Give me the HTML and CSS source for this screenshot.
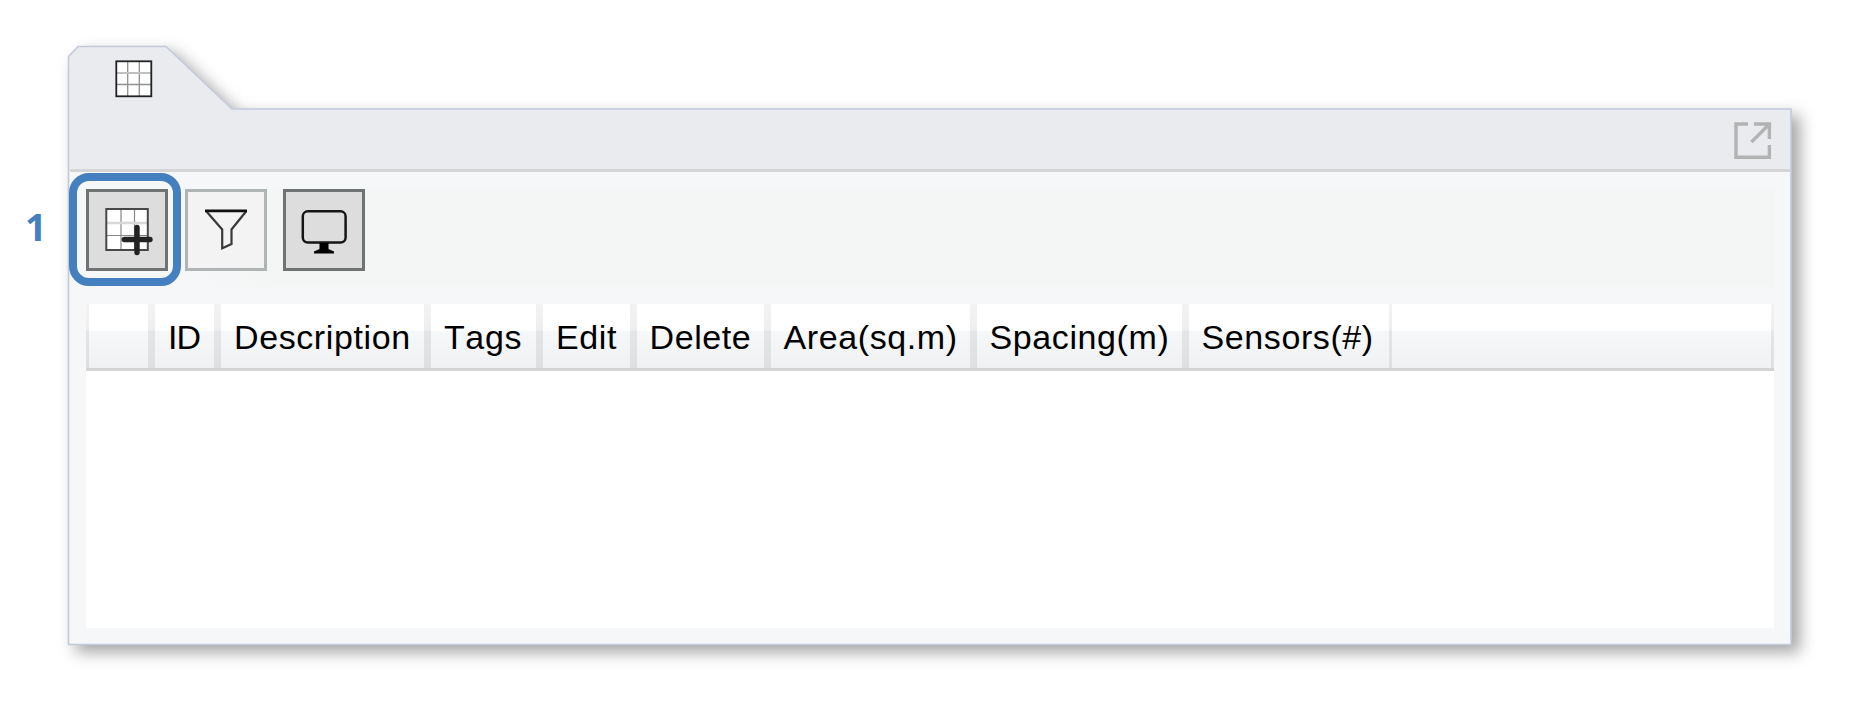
FILE: index.html
```html
<!DOCTYPE html>
<html lang="en">
<head>
<meta charset="utf-8">
<title>Sensor grids</title>
<link rel="stylesheet" href="styles.css">
</head>
<body>
<main class="page">
  <div class="callout-number">1</div>
  <section class="panel">
    <svg class="panel-frame" width="1724" height="600" viewBox="68 46 1724 600">
      <path class="frame-fill" d="M68.5 56.5 L78 46.5 H166 L232 109 H1791 V644.5 H68.5 Z"/>
      <path class="frame-head" d="M68.5 56.5 L78 46.5 H166 L232 109 H1791 V170 H68.5 Z"/>
      <path class="frame-line" d="M68.5 56.5 L78 46.5 H166 L232 109 H1791 V644.5 H68.5 Z"/>
    </svg>
    <div class="tab">
      <svg width="38" height="38" viewBox="0 0 38 38">
        <rect x="1.3" y="1.3" width="35" height="35" fill="#fff"/>
        <path d="M12.7 1V37M24.3 1V37M1 24.5H37" stroke="#909090" stroke-width="1.3"/>
        <path d="M1 13H37" stroke="#c0c0c0" stroke-width="2.2"/>
        <rect x="1.3" y="1.3" width="35" height="35" fill="none" stroke="#222" stroke-width="1.8"/>
      </svg>
    </div>
    <header class="title-bar">
      <svg width="38" height="38" viewBox="0 0 38 38" fill="none" stroke="#b3b3b3" stroke-width="3.4">
        <path d="M14 2H2V35.2H35.4V23M20 2H35.4V17M17.5 20L34 3.5"/>
      </svg>
    </header>
    <div class="toolbar">
      <button class="tool tool-active highlighted" aria-label="Add grid">
        <svg width="76" height="76" viewBox="89 192 76 76">
          <rect x="106" y="209" width="42" height="41" fill="#fff"/>
          <path d="M121 209V250M134.5 209V250M106 235.5H148" stroke="#888" stroke-width="1.2"/>
          <path d="M106 223H148" stroke="#d8d8d8" stroke-width="2.4"/>
          <rect x="106.300" y="209" width="41.500" height="41" fill="none" stroke="#484848" stroke-width="2"/>
          <path d="M124.300 239.500H150M137 227.500V252.500" stroke="#222" stroke-width="5.4" stroke-linecap="round"/>
        </svg>
      </button>
      <button class="tool" aria-label="Filter">
        <svg width="76" height="76" viewBox="187 192 76 76" fill="none" stroke="#3a3a3a">
          <path d="M205.500 211.500L221.200 229.500V248.300L230.500 244V229.500L245 211.500" stroke-width="2.2"/>
          <path d="M204 210.800H246" stroke="#111" stroke-width="2.7"/>
        </svg>
      </button>
      <button class="tool tool-active" aria-label="Display">
        <svg width="76" height="76" viewBox="286 192 76 76">
          <rect x="302.800" y="211.300" width="42.800" height="31.200" rx="5" fill="none" stroke="#151515" stroke-width="2.500"/>
          <path d="M319.500 243H328.500V249L334 251.500V253.500H314V251.500L319.500 249Z" fill="#000"/>
        </svg>
      </button>
    </div>
    <div class="table">
      <div class="row">
        <div class="cell"></div>
        <div class="cell narrow">ID</div>
        <div class="cell">Description</div>
        <div class="cell">Tags</div>
        <div class="cell">Edit</div>
        <div class="cell">Delete</div>
        <div class="cell">Area(sq.m)</div>
        <div class="cell">Spacing(m)</div>
        <div class="cell">Sensors(#)</div>
        <div class="cell"></div>
      </div>
      <div class="rows"></div>
    </div>
  </section>
</main>
</body>
</html>
```
FILE: styles.css
```css
*, *::after { box-sizing: border-box; }
body {
  margin: 0;
  background: #fff;
  font-family: "Liberation Sans", Arial, sans-serif;
}
.page {
  width: 1860px;
  height: 704px;
  display: flex;
  overflow: hidden;
  padding-top: 46px;
}
.callout-number {
  width: 68px;
  padding: 158px 0 0 25px;
  font-family: "Open Sans", "Noto Sans", sans-serif;
  font-size: 38px;
  line-height: 44px;
  font-weight: bold;
  color: #4480c0;
}
.panel {
  position: relative;
  width: 1724px;
  height: 600px;
}
.panel-frame {
  position: absolute;
  inset: 0;
  z-index: -1;
  overflow: visible;
  filter: drop-shadow(8px 7px 8px rgba(0, 0, 0, .36));
}
.frame-fill { fill: #f6f7f9; }
.frame-head { fill: #eaebef; }
.frame-line {
  fill: none;
  stroke: #c3cadc;
  stroke-width: 1.6;
}
.tab {
  height: 63px;
  padding: 14px 0 0 46.500px;
}
.title-bar {
  height: 63px;
  margin: 0 2px 0 1.500px;
  padding: 13px 18px 0 0;
  display: flex;
  justify-content: flex-end;
  border-bottom: 3px solid #d5d5d6;
}
.tab svg, .title-bar svg, .tool svg { display: block; }
.toolbar {
  display: flex;
  gap: 16.500px;
  height: 98px;
  margin: 17px 18px 17px;
  background: linear-gradient(90deg, #f6f7f9 5%, #f4f6f5 12%);
}
.tool {
  position: relative;
  width: 82px;
  height: 82px;
  padding: 0;
  border: 3px solid #aeb5b4;
  background: #f3f3f3;
}
.tool-active {
  border-color: #6f7371;
  background: #ddd;
}
.highlighted::after {
  content: "";
  position: absolute;
  left: -20px;
  top: -19px;
  width: 112px;
  height: 113px;
  border: 8px solid #4480c0;
  border-radius: 20px;
}
.table { margin: 0 18px; }
.row {
  display: grid;
  grid-template-columns: 65.500px 66px 210px 112px 93.500px 134px 206px 212px 205.500px 383.500px;
  height: 67px;
  border-bottom: 3px solid #d4d4d4;
  background: linear-gradient(#f3f3f3 0, #eee 26px, #e4e5e6 27px, #dedfe1 64px);
}
.cell {
  margin: 0 3.500px;
  padding: 14px 0 0 13px;
  font-size: 34px;
  line-height: 39px;
  letter-spacing: .6px;
  font-kerning: none;
  white-space: nowrap;
  color: #000;
  background: linear-gradient(#fff 0, #fff 26px, #f6f7f9 28px, #f0f1f3 64px);
}
.narrow { letter-spacing: -1px; }
.cell:first-child { margin-left: 3px; }
.cell:nth-child(9) { margin-right: 2px; }
.cell:last-child { margin: 0 3px 0 1px; }
.rows {
  height: 257px;
  background: #fff;
}
```
